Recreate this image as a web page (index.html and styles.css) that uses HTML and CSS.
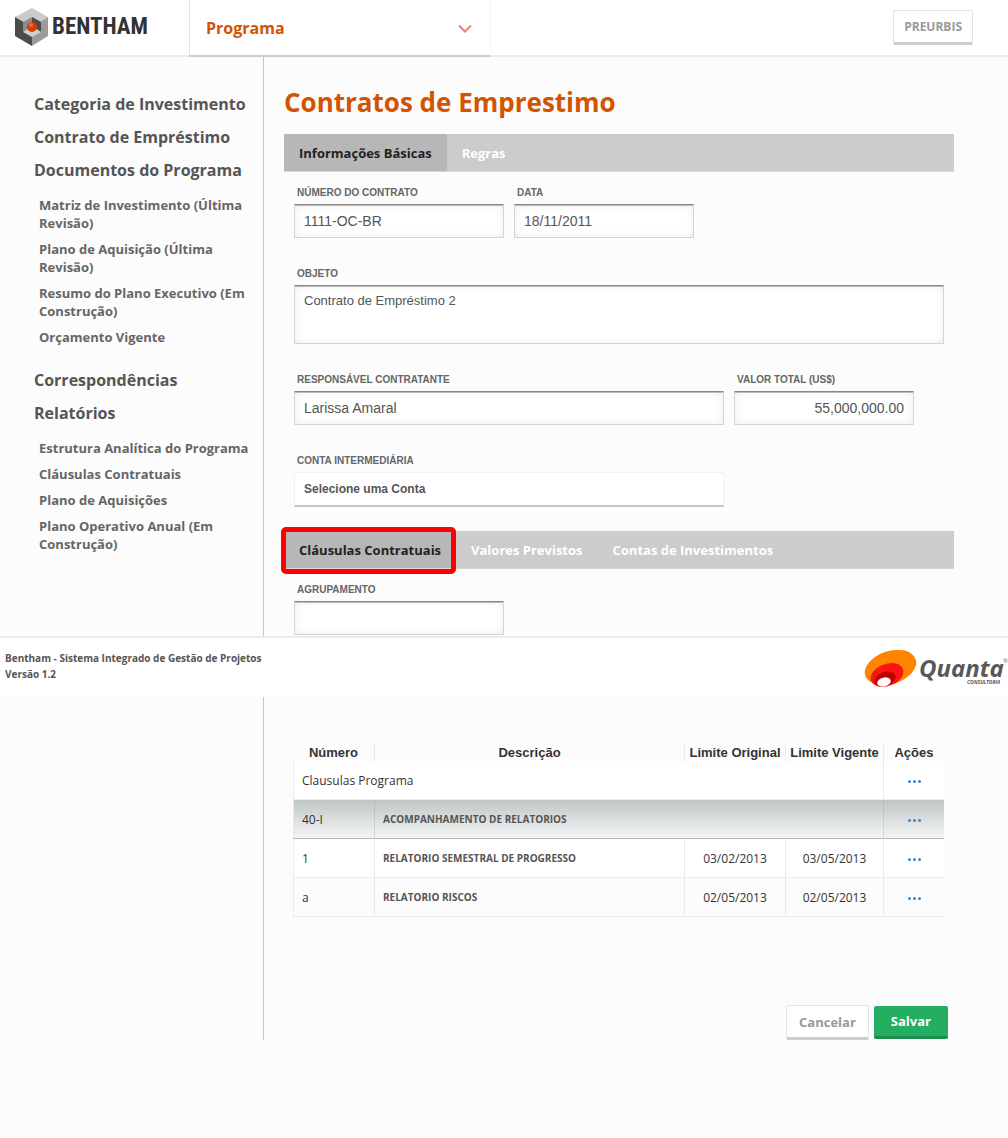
FILE: index.html
```html
<!DOCTYPE html>
<html lang="pt-BR">
<head>
<meta charset="utf-8">
<title>Bentham - Contratos de Emprestimo</title>
<link rel="stylesheet" href="styles.css">
</head>
<body>
<header class="topbar">
  <a class="brand" href="#">
    <svg class="brand-mark" width="34" height="38" viewBox="0 0 34 38" aria-hidden="true">
      <path fill="#cbcbcb" d="M17 0 33 9 17 19 0 9Z"/>
      <path fill="#4b4b4b" d="M0 9 17 19V38L0 28Z"/>
      <path fill="#9a9a9a" d="M33 9 17 19V38L33 28Z"/>
      <path fill="#8b8b8b" d="M8 14 17 9V19L8 24Z"/>
      <path fill="#4b4b4b" d="M17 9 26 14V24L17 19Z"/>
      <path fill="#cfcfcf" d="M8 24 17 18 26 24 17 29Z"/>
      <circle cx="17" cy="19" r="5" fill="#d63c06"/>
      <circle cx="16" cy="17" r="2" fill="#f0703a"/>
    </svg>
    <span class="brand-name">BENTHAM</span>
  </a>
  <div class="program">
    <select class="program-select" aria-label="Programa">
      <option>Programa</option>
    </select>
    <svg class="chevron" width="14" height="10" viewBox="0 0 14 10" aria-hidden="true"><path d="M1 1.5 7 7.5 13 1.5" fill="none" stroke="#ee7f7f" stroke-width="2"/></svg>
  </div>
  <button class="btn btn-user" type="button">PREURBIS</button>
</header>

<div class="layout">
  <nav class="sidebar">
    <ul class="menu">
      <li><a href="#">Categoria de Investimento</a></li>
      <li><a href="#">Contrato de Empréstimo</a></li>
      <li><a href="#">Documentos do Programa</a>
        <ul class="submenu">
          <li><a href="#">Matriz de Investimento (Última Revisão)</a></li>
          <li><a href="#">Plano de Aquisição (Última Revisão)</a></li>
          <li><a href="#">Resumo do Plano Executivo (Em Construção)</a></li>
          <li><a href="#">Orçamento Vigente</a></li>
        </ul>
      </li>
      <li><a href="#">Correspondências</a></li>
      <li><a href="#">Relatórios</a>
        <ul class="submenu">
          <li><a href="#">Estrutura Analítica do Programa</a></li>
          <li><a href="#">Cláusulas Contratuais</a></li>
          <li><a href="#">Plano de Aquisições</a></li>
          <li><a href="#">Plano Operativo Anual (Em Construção)</a></li>
        </ul>
      </li>
    </ul>
  </nav>

  <main class="content">
    <h1>Contratos de Emprestimo</h1>

    <div class="tabs">
      <button class="tab active" type="button">Informações Básicas</button>
      <button class="tab" type="button">Regras</button>
    </div>
    <form class="form">
      <div class="row">
        <div class="field w-code"><label for="numero">NÚMERO DO CONTRATO</label><input id="numero" type="text" value="1111-OC-BR"></div>
        <div class="field w-short"><label for="data">DATA</label><input id="data" type="text" value="18/11/2011"></div>
      </div>
      <div class="row">
        <div class="field w-full"><label for="objeto">OBJETO</label><textarea id="objeto">Contrato de Empréstimo 2</textarea></div>
      </div>
      <div class="row">
        <div class="field w-long"><label for="resp">RESPONSÁVEL CONTRATANTE</label><input id="resp" type="text" value="Larissa Amaral"></div>
        <div class="field w-short"><label for="valor">VALOR TOTAL (US$)</label><input id="valor" class="amount" type="text" value="55,000,000.00"></div>
      </div>
      <div class="row">
        <div class="field w-long"><label for="conta">CONTA INTERMEDIÁRIA</label><select id="conta"><option>Selecione uma Conta</option></select></div>
      </div>
    </form>

    <div class="tabs">
      <button class="tab active marked" type="button">Cláusulas Contratuais</button>
      <button class="tab" type="button">Valores Previstos</button>
      <button class="tab" type="button">Contas de Investimentos</button>
    </div>
    <form class="form form-group">
      <div class="row">
        <div class="field w-code"><label for="agrup">AGRUPAMENTO</label><input id="agrup" type="text"></div>
      </div>
    </form>

    <table class="clauses">
      <colgroup><col class="c-num"><col><col class="c-orig"><col class="c-vig"><col class="c-act"></colgroup>
      <thead>
        <tr><th>Número</th><th>Descrição</th><th>Limite Original</th><th>Limite Vigente</th><th>Ações</th></tr>
      </thead>
      <tbody>
        <tr><td colspan="4">Clausulas Programa</td><td class="act"><button class="dots" type="button" aria-label="Ações"><i></i><i></i><i></i></button></td></tr>
        <tr class="group"><td>40-I</td><td class="desc" colspan="3">ACOMPANHAMENTO DE RELATORIOS</td><td class="act"><button class="dots" type="button" aria-label="Ações"><i></i><i></i><i></i></button></td></tr>
        <tr><td>1</td><td class="desc">RELATORIO SEMESTRAL DE PROGRESSO</td><td class="date">03/02/2013</td><td class="date">03/05/2013</td><td class="act"><button class="dots" type="button" aria-label="Ações"><i></i><i></i><i></i></button></td></tr>
        <tr class="alt"><td>a</td><td class="desc">RELATORIO RISCOS</td><td class="date">02/05/2013</td><td class="date">02/05/2013</td><td class="act"><button class="dots" type="button" aria-label="Ações"><i></i><i></i><i></i></button></td></tr>
      </tbody>
    </table>

    <div class="actions">
      <button class="btn" type="button">Cancelar</button>
      <button class="btn btn-save" type="submit">Salvar</button>
    </div>
  </main>
</div>

<footer class="footer">
  <p>Bentham - Sistema Integrado de Gestão de Projetos<br>Versão 1.2</p>
  <svg width="144" height="40" viewBox="0 0 144 40" role="img" aria-label="Quanta Consultoria">
    <ellipse cx="26.500" cy="17.500" rx="26.500" ry="16.500" transform="rotate(-18 26.500 17.500)" fill="#ff8400"/>
    <ellipse cx="23" cy="25" rx="17" ry="11" transform="rotate(-20 23 25)" fill="#fb1414"/>
    <ellipse cx="21" cy="29" rx="11" ry="7" transform="rotate(-20 21 29)" fill="#bd0000"/>
    <ellipse cx="20" cy="32" rx="7" ry="4.500" transform="rotate(-15 20 32)" fill="#fff"/>
    <text class="quanta" x="55" y="27">Quanta</text>
    <text class="consult" x="103" y="34">CONSULTORIA</text>
    <text class="reg" x="139" y="13">®</text>
  </svg>
</footer>
</body>
</html>
```
FILE: styles.css
```css
* { box-sizing: border-box; }

body {
  margin: 0;
  background: #fcfcfc;
  color: #333;
  font-family: "Open Sans", "Noto Sans", sans-serif;
  font-size: 13px;
}

a { color: inherit; text-decoration: none; }
ul { list-style: none; margin: 0; padding: 0; }
button, input, select, textarea { margin: 0; font: inherit; border-radius: 0; }

/* Top bar */
.topbar {
  display: flex;
  height: 57px;
  background: #fff;
  border-bottom: 2px solid #ebebeb;
}
.brand {
  display: flex;
  align-items: center;
  gap: 3px;
  width: 189px;
  padding: 0 0 2px 15px;
}
.brand-name {
  font: bold 23px/38px "Liberation Sans Narrow", "Roboto Condensed", "Liberation Sans", sans-serif;
  color: #333;
}
.program {
  position: relative;
  width: 302px;
  height: 57px;
  border-left: 1px solid #e4e4e4;
  border-right: 1px solid #f6f6f6;
  border-bottom: 2px solid #ccc;
}
.program-select {
  appearance: none;
  width: 100%;
  height: 55px;
  padding: 0 16px;
  border: 0;
  background: #fff;
  color: #d35400;
  font-size: 16px;
  font-weight: bold;
}
.chevron {
  position: absolute;
  right: 18px;
  top: 24px;
  pointer-events: none;
}

.btn {
  height: 35px;
  padding: 0 12px;
  border: 1px solid #e3e3e3;
  border-bottom: 3px solid #ccc;
  border-radius: 2px;
  background: #fff;
  color: #999;
  font-size: 13px;
  font-weight: bold;
}
.btn-user {
  margin: 10px 35px 0 auto;
  padding: 0 10px;
  font-size: 12px;
}
.btn-save {
  height: 33px;
  padding: 0 17px;
  border: 0;
  border-bottom: 3px solid #1c8c4c;
  background: #23ae61;
  color: #fff;
}

/* Page columns */
.layout { display: flex; margin-bottom: 98px; }
.sidebar {
  flex: none;
  width: 264px;
  padding: 36px 14px 0 34px;
  border-right: 1px solid #c8c8c8;
}
.menu {
  color: #555;
  font-size: 16px;
  font-weight: bold;
  line-height: 22px;
}
.menu > li { margin-bottom: 11px; }
.submenu {
  margin: 15px 0 23px;
  padding-left: 5px;
  color: #666;
  font-size: 13px;
  line-height: 18px;
}
.submenu li + li { margin-top: 8px; }

.content {
  flex: 1;
  min-width: 0;
  padding: 27px 54px 0 20px;
}
h1 {
  margin: 0 0 14px;
  color: #d35400;
  font-size: 26px;
  line-height: 36px;
}

.tabs {
  display: flex;
  height: 38px;
  background: #ccc;
  border-bottom: 1px solid #d8d8d8;
}
.tab {
  position: relative;
  padding: 0 15px;
  border: 0;
  background: none;
  color: #fff;
  font-weight: bold;
}
.tab.active { background: #b7b7b7; color: #222; }

/* Red frame that calls attention to a tab */
.tab.marked::after {
  content: "";
  position: absolute;
  inset: -4px 0 -6px -3px;
  border: 5px solid #f00;
  border-radius: 5px;
}

/* Forms */
.form {
  padding: 15px 10px 24px;
  font-family: "Liberation Sans", Arial, sans-serif;
}
.form-group { padding-bottom: 108px; }
.row { display: flex; gap: 10px; }
.row + .row { margin-top: 30px; }
.field { display: flex; flex-direction: column; gap: 5px; }
.w-code { width: 210px; }
.w-short { width: 180px; }
.w-long { width: 430px; }
.w-full { width: 100%; }
label {
  padding-left: 3px;
  color: #666;
  font-size: 10px;
  font-weight: bold;
  line-height: 12px;
}
.field input, .field textarea {
  width: 100%;
  height: 34px;
  padding: 0 9px;
  border: 1px solid #d4d4d4;
  border-top-color: #888;
  background: #fff;
  box-shadow: inset 0 1px 0 #bbb, inset 0 0 8px #ececec;
  color: #555;
  font-size: 14px;
}
.field textarea {
  height: 59px;
  padding: 7px 9px;
  font-size: 13px;
  line-height: 15px;
  resize: none;
}
.field .amount { text-align: right; }
.field select {
  appearance: none;
  width: 100%;
  height: 35px;
  padding: 0 9px;
  border: 1px solid #f0f0f0;
  border-bottom: 2px solid #c4c4c4;
  background: #fff;
  color: #555;
  font-size: 12px;
  font-weight: bold;
}

/* Clauses table */
.clauses {
  width: calc(100% - 19px);
  margin: 0 10px 0 9px;
  table-layout: fixed;
  border-spacing: 0;
  color: #333;
  font-size: 12px;
}
.c-num { width: 82px; }
.c-orig { width: 101px; }
.c-vig { width: 98px; }
.c-act { width: 60px; }
.clauses th {
  height: 18px;
  padding: 2px 0 0;
  border-right: 1px solid #ebebeb;
  font: bold 13px/16px "Liberation Sans", Arial, sans-serif;
}
.clauses td {
  height: 39px;
  padding: 0 8px;
  border-right: 1px solid #ebebeb;
  border-bottom: 1px solid #ebebeb;
}
.clauses td:first-child { border-left: 1px solid #ebebeb; }
.clauses th:last-child, .clauses td:last-child { border-right: 0; }
.clauses tbody tr { background: #fff; }
.clauses tbody .alt { background: #fcfcfc; }
.clauses tbody .group { background: linear-gradient(#bfc6c6, #f6f7f7); }
.clauses .group td { border-right-color: rgba(150, 160, 160, .3); border-bottom-color: #b5b5b5; }
.clauses .desc { color: #555; font-size: 10px; font-weight: bold; }
.clauses .date { padding: 0; text-align: center; }
.clauses .act { padding: 0; text-align: center; }
.dots {
  display: inline-flex;
  gap: 2px;
  padding: 4px;
  border: 0;
  background: none;
  vertical-align: middle;
}
.dots i { width: 3px; height: 3px; border-radius: 50%; background: #3b86d0; }

.actions {
  display: flex;
  justify-content: flex-end;
  align-items: center;
  gap: 5px;
  margin: 88px 6px 0 0;
}

/* Footer band floats over the page at the fold */
.footer {
  position: absolute;
  top: 636px;
  left: 0;
  right: 0;
  display: flex;
  justify-content: space-between;
  height: 61px;
  padding: 12px 0 0 5px;
  border-top: 2px solid #ebebeb;
  background: #fff;
}
.footer p {
  margin: 0;
  color: #555;
  font-size: 10px;
  font-weight: bold;
  line-height: 16px;
}
.quanta { font: italic bold 24px "Open Sans", sans-serif; fill: #58585a; }
.consult { font: italic bold 5px "Open Sans", sans-serif; fill: #58585a; }
.reg { font: 6px "Open Sans", sans-serif; fill: #777; }
```
